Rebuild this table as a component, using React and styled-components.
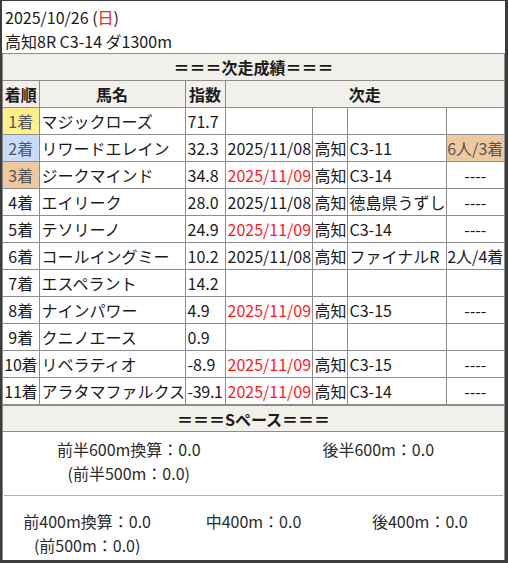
import React from "react";
import styled, { createGlobalStyle } from "styled-components";

const Global = createGlobalStyle`
  html, body { margin: 0; padding: 0; background: #fff; }
  * { box-sizing: border-box; }
`;

const Frame = styled.div`
  width: 508px;
  height: 563px;
  border-style: solid;
  border-color: #3c3c3c;
  border-width: 1px 3px 3px 2px;
  background: #fff;
  font-family: "Noto Sans CJK JP", "Noto Sans", sans-serif;
  font-size: 16px;
  color: #1a1a1a;
  display: flex;
  flex-direction: column;
  overflow: hidden;
`;

const Header = styled.div`
  padding: 4px 0 0 3px;
  height: 52px;
`;

const Line = styled.div`
  height: 24px;
  line-height: 24px;
  white-space: nowrap;
`;

const Red = styled.span`
  color: #ff2020;
`;

const Body = styled.div`
  flex: 1;
  border-left: 1px solid #8c8c8c;
  border-right: 1px solid #8c8c8c;
  display: flex;
  flex-direction: column;
`;

const SectionTitle = styled.div`
  height: 27px;
  line-height: 26px;
  border-top: 1px solid #8c8c8c;
  border-bottom: ${(p) => (p.$bottom ? "1px solid #8c8c8c" : "none")};
  background: #f2f0ea;
  font-weight: bold;
  text-align: center;
`;

const Table = styled.table`
  width: 501px;
  border-collapse: collapse;
  table-layout: fixed;
`;

const Th = styled.th`
  height: 27px;
  padding: 0;
  border: 1px solid #8c8c8c;
  background: #f2f0ea;
  font-weight: bold;
  text-align: center;
  white-space: nowrap;
  &:first-child { border-left: none; }
  &:last-child { border-right: none; }
`;

const rankBg = { 1: "#fff08a", 2: "#c9dcfd", 3: "#efc8a0" };

const Td = styled.td`
  height: 27px;
  padding: ${(p) => (p.$center ? "0" : "0 0 0 2px")};
  border: 1px solid #8c8c8c;
  text-align: ${(p) => (p.$center ? "center" : "left")};
  background: ${(p) => p.$bg || "transparent"};
  color: ${(p) => (p.$red ? "#ff1a1a" : p.$bg ? "#555" : "#1a1a1a")};
  white-space: nowrap;
  overflow: hidden;
  letter-spacing: ${(p) => (p.$tight ? "-0.3px" : "0")};
  &:first-child { border-left: none; }
  &:last-child { border-right: none; }
`;

const SpaceRow = styled.div`
  display: grid;
  grid-template-columns: ${(p) => `repeat(${p.$cols}, 1fr)`};
  padding-top: ${(p) => p.$pt}px;
  height: ${(p) => p.$h}px;
  margin: 0 1px;
  border-bottom: ${(p) => (p.$divider ? "1px solid #b0b0b0" : "none")};
  color: #2a2a2a;
`;

const SpaceCell = styled.div`
  text-align: center;
  white-space: nowrap;
`;

const rows = [
  { r: 1, name: "マジックローズ", idx: "71.7" },
  { r: 2, name: "リワードエレイン", idx: "32.3", date: "2025/11/08", place: "高知", cls: "C3-11", res: "6人/3着", resBg: rankBg[3] },
  { r: 3, name: "ジークマインド", idx: "34.8", date: "2025/11/09", red: true, place: "高知", cls: "C3-14", res: "----" },
  { r: 4, name: "エイリーク", idx: "28.0", date: "2025/11/08", place: "高知", cls: "徳島県うずし", res: "----" },
  { r: 5, name: "テソリーノ", idx: "24.9", date: "2025/11/09", red: true, place: "高知", cls: "C3-14", res: "----" },
  { r: 6, name: "コールイングミー", idx: "10.2", date: "2025/11/08", place: "高知", cls: "ファイナルR", res: "2人/4着" },
  { r: 7, name: "エスペラント", idx: "14.2" },
  { r: 8, name: "ナインパワー", idx: "4.9", date: "2025/11/09", red: true, place: "高知", cls: "C3-15", res: "----" },
  { r: 9, name: "クニノエース", idx: "0.9" },
  { r: 10, name: "リベラティオ", idx: "-8.9", date: "2025/11/09", red: true, place: "高知", cls: "C3-15", res: "----" },
  { r: 11, name: "アラタマファルクス", idx: "-39.1", date: "2025/11/09", red: true, place: "高知", cls: "C3-14", res: "----" },
];

export default function App() {
  return (
    <>
      <Global />
      <Frame>
        <Header>
          <Line>
            2025/10/26 (<Red>日</Red>)
          </Line>
          <Line>高知8R C3-14 ダ1300m</Line>
        </Header>
        <Body>
          <SectionTitle>＝＝＝次走成績＝＝＝</SectionTitle>
          <Table>
            <colgroup>
              <col style={{ width: 36 }} />
              <col style={{ width: 146 }} />
              <col style={{ width: 40 }} />
              <col style={{ width: 87 }} />
              <col style={{ width: 35 }} />
              <col style={{ width: 99 }} />
              <col style={{ width: 58 }} />
            </colgroup>
            <thead>
              <tr>
                <Th>着順</Th>
                <Th>馬名</Th>
                <Th>指数</Th>
                <Th colSpan={4}>次走</Th>
              </tr>
            </thead>
            <tbody>
              {rows.map((row) => (
                <tr key={row.r}>
                  <Td $center $bg={rankBg[row.r]} $tight={row.r >= 10}>
                    {row.r}着
                  </Td>
                  <Td>{row.name}</Td>
                  <Td $tight={row.idx.length > 4}>{row.idx}</Td>
                  <Td $red={row.red}>{row.date || ""}</Td>
                  <Td>{row.place || ""}</Td>
                  <Td>{row.cls || ""}</Td>
                  <Td $center $bg={row.resBg}>
                    {row.res || ""}
                  </Td>
                </tr>
              ))}
            </tbody>
          </Table>
          <SectionTitle $bottom>＝＝＝Sペース＝＝＝</SectionTitle>
          <SpaceRow $cols={2} $pt={5} $h={64} $divider>
            <SpaceCell>
              <Line>前半600m換算：0.0</Line>
              <Line>(前半500m：0.0)</Line>
            </SpaceCell>
            <SpaceCell>
              <Line>後半600m：0.0</Line>
            </SpaceCell>
          </SpaceRow>
          <SpaceRow $cols={3} $pt={13} $h={64}>
            <SpaceCell>
              <Line>前400m換算：0.0</Line>
              <Line>(前500m：0.0)</Line>
            </SpaceCell>
            <SpaceCell>
              <Line>中400m：0.0</Line>
            </SpaceCell>
            <SpaceCell>
              <Line>後400m：0.0</Line>
            </SpaceCell>
          </SpaceRow>
        </Body>
      </Frame>
    </>
  );
}
